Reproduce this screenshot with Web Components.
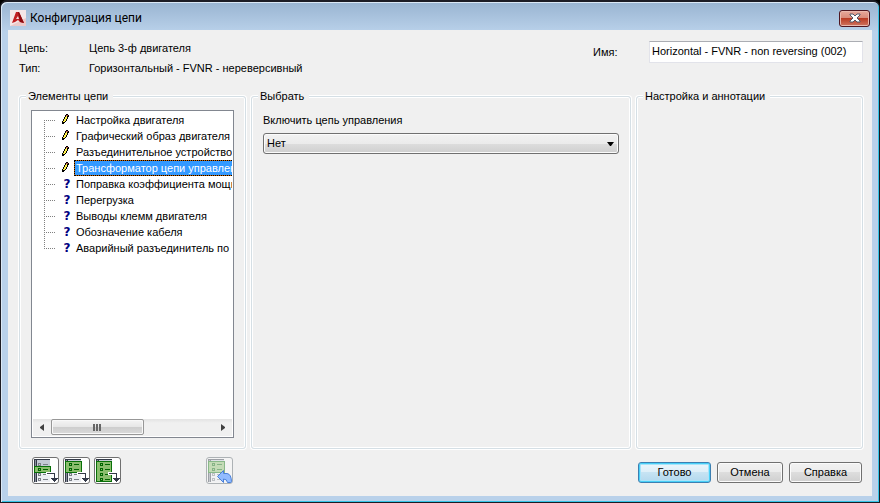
<!DOCTYPE html>
<html lang="ru">
<head>
<meta charset="utf-8">
<title>Конфигурация цепи</title>
<style>
	body {
		margin: 0;
		font: 11px/13px "Liberation Sans", Arial, sans-serif;
		color: #000;
		background: #000;
	}
</style>
</head>
<body>
<circuit-dialog></circuit-dialog>

<script>
// Window frame: title bar, body and footer
class DialogWindow extends HTMLElement {

	constructor() {
		super();
		this.shadow = this.attachShadow({mode: 'open'});
		this.shadow.innerHTML = `
		<style>
		:host {
			display: flex;
			flex-direction: column;
			box-sizing: border-box;
			min-height: 100vh;
			padding: 0 6px 6px;
			border: 1px solid #1c1c24;
			border-top-width: 2px;
			border-radius: 7px 7px 0 0;
			background: linear-gradient(#99b4d1, #b9d1ea 30px, #b9d1ea);
			box-shadow: inset 1px 1px 0 #dbe8f5, inset -1px -1px 0 #35c4e6;
		}
		header {
			display: flex;
			align-items: center;
			gap: 4px;
			height: 28px;
			padding: 0 3px;
			font: 12px/16px Roboto, "Noto Sans", sans-serif;
		}
		h1 {
			flex: 1;
			margin: 4px 0 0;
			font: inherit;
		}
		header svg {
			display: block;
		}
		.logo {
			margin-top: 4px;
		}
		.close {
			display: grid;
			place-items: center;
			box-sizing: border-box;
			width: 31px;
			height: 17px;
			margin-top: 4px;
			padding: 0;
			border: 1px solid #4f1620;
			border-radius: 3px;
			background: linear-gradient(#e8a99b, #d98b7b 46%, #ba3c25 50%, #cf7560);
			box-shadow: inset 0 0 0 1px #eab8ad;
		}
		main {
			display: flex;
			flex-direction: column;
			flex: 1;
			margin: 0 1px;
			background: #f0f0f0;
		}
		</style>
		<header>
			<svg class="logo" width="16" height="16" viewBox="0 0 16 16">
				<rect width="16" height="16" fill="#ecc9c9"/>
				<path d="M0 0H16V8L0 16Z" fill="#f5e6e7"/>
				<path d="M6 2H9L14 13L10 12L8 10L5 12L2 13Z" fill="#c01c20"/>
				<path d="M8 2H9L14 13L10 12Z" fill="#8d0b10"/>
				<path d="M8 6L9 9H6Z" fill="#f3dada"/>
			</svg>
			<h1><slot name="title"></slot></h1>
			<button class="close" aria-label="Закрыть">
				<svg width="12" height="10" viewBox="0 0 12 10">
					<path d="M1 1H4L6 3L8 1H11V2L8 5L11 8V9H8L6 7L4 9H1V8L4 5L1 2Z" fill="#fff" stroke="#535666"/>
				</svg>
			</button>
		</header>
		<main><slot></slot></main>`;
	}
}

// Etched group with a caption in its top line
class GroupBox extends HTMLElement {

	constructor() {
		super();
		this.shadow = this.attachShadow({mode: 'open'});
	}
	connectedCallback() {
		this.shadow.innerHTML = `
		<style>
		:host {
			display: flex;
			min-width: 0;
		}
		fieldset {
			flex: 1;
			box-sizing: border-box;
			min-width: 0;
			margin: 0;
			padding: 7px 11px 10px;
			border: 1px solid #d5dfe5;
			border-radius: 3px;
			box-shadow: inset 0 0 0 1px #fff, 0 0 0 1px #fff;
		}
		legend {
			margin-left: -5px;
			padding: 0 5px 0 2px;
			background: #f0f0f0;
		}
		</style>
		<fieldset>
			<legend>${this.getAttribute('caption')}</legend>
			<slot></slot>
		</fieldset>`;
	}
}

class TreeItem extends HTMLElement {

	constructor() {
		super();
		this.shadow = this.attachShadow({mode: 'open'});
	}
	connectedCallback() {
		this.setAttribute('role', 'treeitem');
		this.render();
	}
	render() {
		let pencil = `
			<svg width="9" height="12" viewBox="0 0 9 12" shape-rendering="crispEdges">
				<path d="M5 0H7V1H8V3H7V5H6V7H5V8H4V9H3V10H1V7H2V5H3V3H4V1H5Z" fill="#000"/>
				<path d="M5 2H6V3H6V5H5V7H4V8H2V7H3V5H4V3H5Z" fill="#fff04a"/>
				<path d="M5 1H7V2H5Z" fill="#b05050"/>
			</svg>`;
		let question = '<b>?</b>';
		this.shadow.innerHTML = `
		<style>
		:host {
			display: flex;
			align-items: center;
			height: 16px;
			white-space: nowrap;
		}
		.branch {
			flex: none;
			align-self: stretch;
			width: 12px;
			background:
				repeating-linear-gradient(90deg, #808080 0 1px, transparent 1px 2px) 0 8px / 12px 1px no-repeat,
				repeating-linear-gradient(#808080 0 1px, transparent 1px 2px) 0 0 / 1px 100% no-repeat;
		}
		:host(:first-child) .branch {
			background-position: 0 8px, 0 8px;
		}
		:host(:last-child) .branch {
			background-size: 12px 1px, 1px 8px;
		}
		.icon {
			display: grid;
			flex: none;
			place-items: center;
			width: 18px;
		}
		b {
			padding-left: 4px;
			font: bold 12px/14px "DejaVu Sans", sans-serif;
			color: #000080;
		}
		.text {
			height: 16px;
			box-sizing: border-box;
			padding: 0 1px;
			border: 1px solid transparent;
			line-height: 15px;
		}
		:host([selected]) .text {
			color: #fff;
			border: 1px dotted #000;
			background: linear-gradient(#3399ff, #3399ff) padding-box, linear-gradient(#cc6600, #cc6600) border-box;
		}
		</style>
		<span class="branch"></span>
		<span class="icon">${this.getAttribute('icon') == 'pencil' ? pencil : question}</span>
		<span class="text"><slot></slot></span>`;
	}
}

// List of tree items with a horizontal scroll bar under it
class TreeView extends HTMLElement {

	constructor() {
		super();
		this.shadow = this.attachShadow({mode: 'open'});
		this.shadow.innerHTML = `
		<style>
		:host {
			display: flex;
			flex-direction: column;
			box-sizing: border-box;
			height: 100%;
			padding: 1px;
			border: 1px solid #828790;
			background: #fff;
		}
		.items {
			flex: 1;
			overflow: hidden;
			padding-left: 11px;
		}
		.bar {
			display: flex;
			height: 17px;
			background: linear-gradient(#e3e3e3, #f0f0f0 4px, #f0f0f0);
		}
		button {
			display: grid;
			place-items: center;
			width: 18px;
			padding: 0;
			border: 0;
			background: none;
		}
		.track {
			flex: 1;
		}
		.thumb {
			display: grid;
			place-items: center;
			box-sizing: border-box;
			width: 57%;
			height: 16px;
			border: 1px solid #979797;
			border-radius: 2px;
			background: linear-gradient(#f4f4f4, #e6e6e6 50%, #cdcdcd 50%, #dadada);
			box-shadow: inset 0 0 0 1px #f8f8f8;
		}
		</style>
		<div class="items" role="tree"><slot></slot></div>
		<div class="bar">
			<button class="left" aria-label="Влево">
				<svg width="4" height="7"><path d="M4 0V7L0 4V3Z" fill="#404040"/></svg>
			</button>
			<div class="track">
				<div class="thumb">
					<svg width="8" height="7" shape-rendering="crispEdges">
						<path d="M0 0H2V7H0ZM3 0H5V7H3ZM6 0H8V7H6Z" fill="#666"/>
					</svg>
				</div>
			</div>
			<button class="right" aria-label="Вправо">
				<svg width="4" height="7"><path d="M0 0V7L4 4V3Z" fill="#404040"/></svg>
			</button>
		</div>`;
	}
	connectedCallback() {
		let items = this.shadow.querySelector('.items');
		this.shadow.querySelector('.left').addEventListener('click', () => items.scrollLeft -= 20);
		this.shadow.querySelector('.right').addEventListener('click', () => items.scrollLeft += 20);
	}
}

class DropList extends HTMLElement {

	constructor() {
		super();
		this.shadow = this.attachShadow({mode: 'open'});
	}
	connectedCallback() {
		let options = this.getAttribute('options').split(',');
		this.shadow.innerHTML = `
		<style>
		:host {
			display: block;
			padding-top: 4px;
		}
		label {
			display: block;
			margin-bottom: 6px;
		}
		.box {
			position: relative;
		}
		select {
			appearance: none;
			display: block;
			box-sizing: border-box;
			width: 100%;
			height: 21px;
			padding: 0 20px 0 3px;
			border: 1px solid #707070;
			border-radius: 3px;
			font: inherit;
			color: #000;
			background: linear-gradient(#f2f2f2, #ebebeb 50%, #dddddd 50%, #cfcfcf);
			box-shadow: inset 0 0 0 1px #fbfbfb;
		}
		svg {
			position: absolute;
			top: 9px;
			right: 5px;
			pointer-events: none;
		}
		</style>
		<label for="list">${this.getAttribute('label')}</label>
		<div class="box">
			<select id="list">${options.map(o => `<option>${o}</option>`).join('')}</select>
			<svg width="7" height="4"><path d="M0 0H7L4 4H3Z"/></svg>
		</div>`;
	}
}

class PushButton extends HTMLElement {

	constructor() {
		super();
		this.shadow = this.attachShadow({mode: 'open'});
		this.shadow.innerHTML = `
		<style>
		:host {
			display: block;
		}
		button {
			display: block;
			box-sizing: border-box;
			width: 100%;
			height: 21px;
			padding: 0;
			border: 1px solid #707070;
			border-radius: 3px;
			font: inherit;
			color: #000;
			background: linear-gradient(#f2f2f2, #ebebeb 50%, #dddddd 50%, #cfcfcf);
			box-shadow: inset 0 0 0 1px #fbfbfb;
		}
		:host([default]) button {
			border-color: #3c7fb1;
			background: linear-gradient(#eef6fb, #dceef8 50%, #c6e3f3 50%, #b2d8ee);
			box-shadow: inset 0 0 0 1px #48d0f8, inset 0 0 0 2px #a8e4fa;
		}
		</style>
		<button><slot></slot></button>`;
	}
}

// Square button with a list picture; "rows" says which part of the list is green
class ListButton extends HTMLElement {

	constructor() {
		super();
		this.shadow = this.attachShadow({mode: 'open'});
	}
	connectedCallback() {
		this.render();
	}
	render() {
		// green box, first green row, number of green rows
		let areas = {
			one: ['M2 9H18V15H2Z', 1, 1],
			top: ['M2 4H18V15H2Z', 0, 2],
			all: ['M2 4H17V24H2Z', 0, 4]
		};
		let [area, from, count] = areas[this.getAttribute('rows')];
		let lines = '';
		for (let i = 0; i < 4; i++) {
			let color = i >= from && i < from + count ? '#006400' : '#7b8088';
			let y = 6 + i * 5;
			lines += `<path d="M6 ${y}H9V${y + 3}H6ZM7 ${y + 1}V${y + 2}H8V${y + 1}ZM11 ${y + 1}H16V${y + 2}H11Z" fill="${color}" fill-rule="evenodd"/>`;
		}
		let arrow = `
			<path d="M14 15H24V21H26V22L23 26H21L18 22V21H21V18H14Z" fill="#fff"/>
			<path d="M15 16H23V21H26V22H25V23H24V24H23V25H22V24H21V23H20V22H19V21H22V17H15Z" fill="#343a48"/>`;
		let back = `
			<path d="M11.5 19.5L17.5 13.5V16.5H21Q25.5 17 25.5 25.5H21.5Q21 22 17.5 22V25.5Z" fill="#92bbff" stroke="#4a80d8" shape-rendering="auto"/>`;
		this.shadow.innerHTML = `
		<style>
		:host {
			display: block;
		}
		button {
			display: block;
			box-sizing: border-box;
			width: 27px;
			height: 27px;
			padding: 0;
			border: 1px solid #707070;
			border-radius: 3px;
			overflow: hidden;
			background: #fff;
		}
		button:disabled {
			border-color: #adb2b5;
			background: #f4f4f4;
		}
		svg {
			display: block;
			margin: -1px;
		}
		button:disabled .list {
			opacity: .45;
		}
		</style>
		<button aria-label="${this.getAttribute('label')}" ${this.hasAttribute('disabled') ? 'disabled' : ''}>
			<svg width="27" height="27" viewBox="0 0 27 27" shape-rendering="crispEdges">
				<g class="list">
					<path d="M2 2H18V25H2Z" fill="#eceef2"/>
					<path d="M2 2H18V9H2Z" fill="#c4cad4"/>
					<path d="M2 2H18V3H5V25H2Z" fill="#343a48"/>
					<path d="M3 3H4V25H3Z" fill="#8b929e"/>
					<path d="${area}" fill="#8abd6c" stroke="#087008" transform="translate(.5 .5)"/>
					${lines}
				</g>
				${this.hasAttribute('disabled') ? back : arrow}
			</svg>
		</button>`;
	}
}

class CircuitDialog extends HTMLElement {

	constructor() {
		super();
		this.shadow = this.attachShadow({mode: 'open'});
	}
	connectedCallback() {
		this.render();
	}
	render() {
		this.shadow.innerHTML = `
		<style>
		:host {
			display: block;
		}
		.info {
			display: flex;
			justify-content: space-between;
			align-items: flex-start;
			padding: 11px 9px 0 11px;
		}
		dl {
			display: grid;
			grid-template-columns: 70px auto;
			row-gap: 7px;
			margin: 1px 0 0;
		}
		dd {
			margin: 0;
		}
		.name {
			display: flex;
			align-items: center;
		}
		.name label {
			width: 56px;
		}
		input {
			box-sizing: border-box;
			width: 214px;
			height: 22px;
			padding: 0 2px 2px;
			border: 1px solid #e2e3ea;
			border-top-color: #abadb3;
			font: inherit;
		}
		.groups {
			display: grid;
			grid-template-columns: 227px 1fr 227px;
			gap: 5px;
			flex: 1;
			padding: 15px 9px 0 11px;
		}
		footer {
			display: flex;
			align-items: center;
			padding: 8px 10px 12px 24px;
		}
		.tools {
			display: flex;
			gap: 4px;
			width: 174px;
		}
		.buttons {
			display: grid;
			grid-template-columns: 73px 66px 73px;
			gap: 6px;
			margin: 3px 0 0 auto;
		}
		</style>
		<dialog-window>
			<span slot="title">Конфигурация цепи</span>
			<div class="info">
				<dl>
					<dt>Цепь:</dt><dd>Цепь 3-ф двигателя</dd>
					<dt>Тип:</dt><dd>Горизонтальный - FVNR - нереверсивный</dd>
				</dl>
				<div class="name">
					<label for="name">Имя:</label>
					<input id="name" value="Horizontal - FVNR - non reversing (002)">
				</div>
			</div>
			<div class="groups">
				<group-box caption="Элементы цепи">
					<tree-view>
						<tree-item icon="pencil">Настройка двигателя</tree-item>
						<tree-item icon="pencil">Графический образ двигателя</tree-item>
						<tree-item icon="pencil">Разъединительное устройство</tree-item>
						<tree-item icon="pencil" selected>Трансформатор цепи управления</tree-item>
						<tree-item icon="question">Поправка коэффициента мощности</tree-item>
						<tree-item icon="question">Перегрузка</tree-item>
						<tree-item icon="question">Выводы клемм двигателя</tree-item>
						<tree-item icon="question">Обозначение кабеля</tree-item>
						<tree-item icon="question">Аварийный разъединитель по месту</tree-item>
					</tree-view>
				</group-box>
				<group-box caption="Выбрать">
					<drop-list label="Включить цепь управления" options="Нет,Да"></drop-list>
				</group-box>
				<group-box caption="Настройка и аннотации"></group-box>
			</div>
			<footer>
				<div class="tools">
					<list-button rows="one" label="Вставить элемент"></list-button>
					<list-button rows="top" label="Вставить до элемента"></list-button>
					<list-button rows="all" label="Вставить все"></list-button>
				</div>
				<list-button rows="top" label="Отменить вставку" disabled></list-button>
				<div class="buttons">
					<push-button default>Готово</push-button>
					<push-button>Отмена</push-button>
					<push-button>Справка</push-button>
				</div>
			</footer>
		</dialog-window>`;
	}
}

customElements.define('dialog-window', DialogWindow);
customElements.define('group-box', GroupBox);
customElements.define('tree-item', TreeItem);
customElements.define('tree-view', TreeView);
customElements.define('drop-list', DropList);
customElements.define('push-button', PushButton);
customElements.define('list-button', ListButton);
customElements.define('circuit-dialog', CircuitDialog);
</script>
</body>
</html>
